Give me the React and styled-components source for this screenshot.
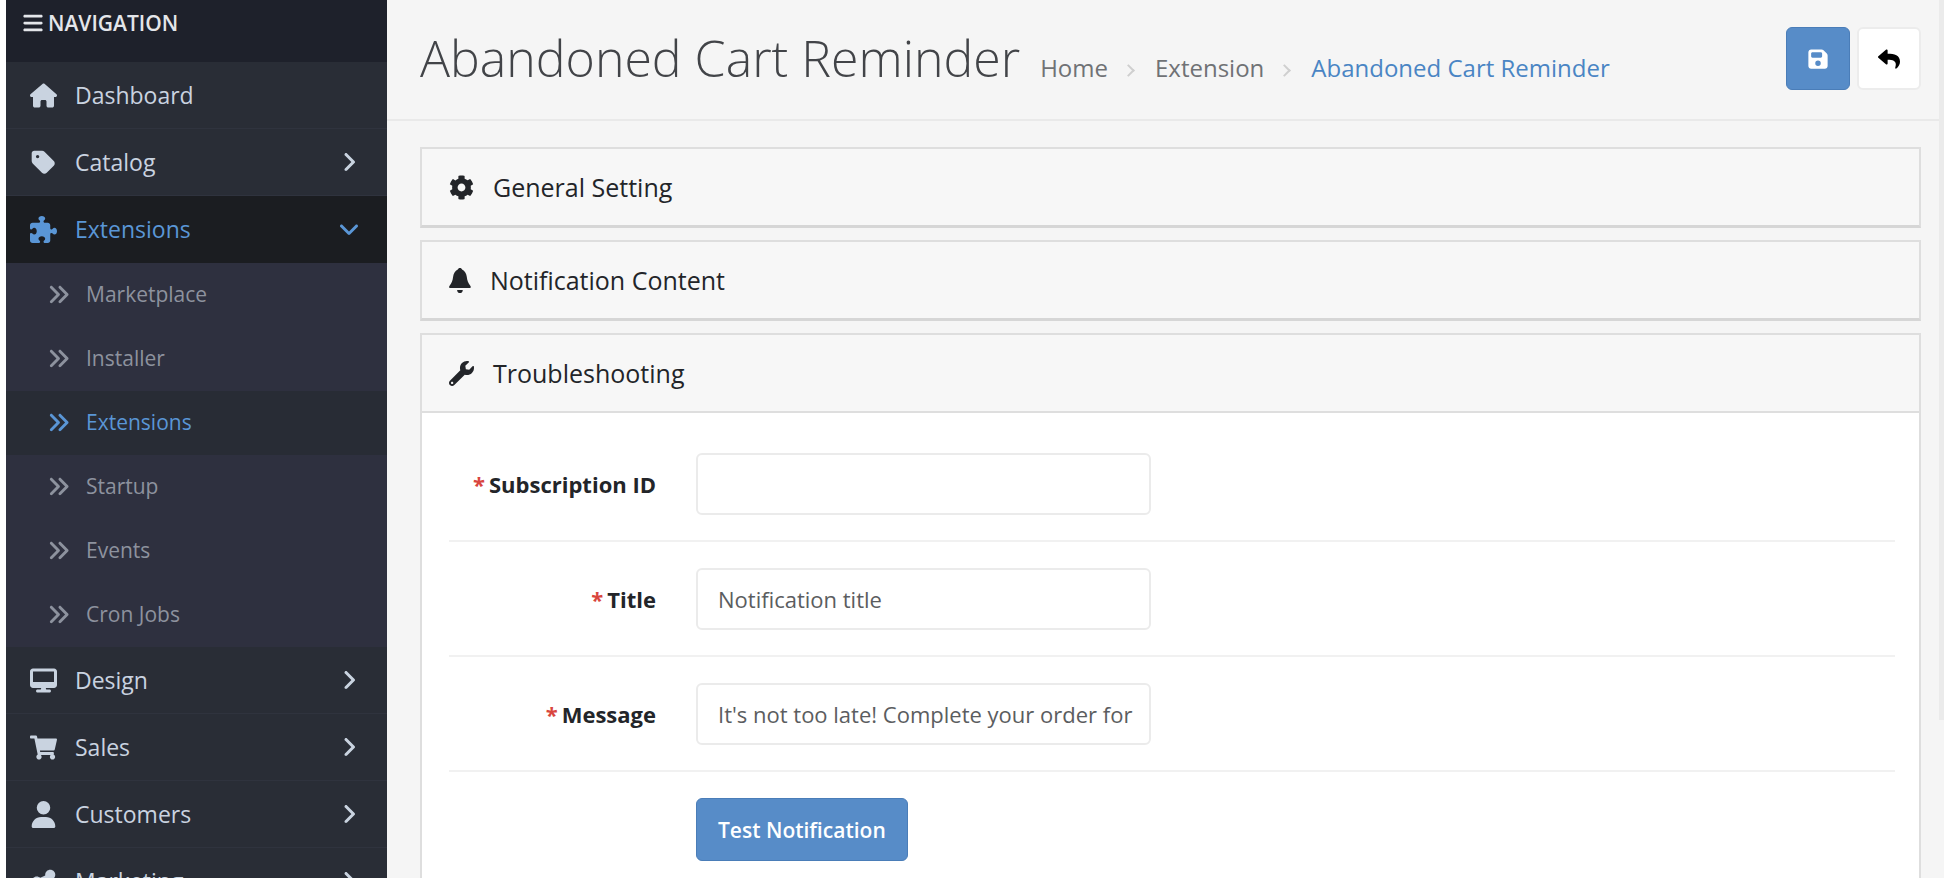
import React from 'react';
import styled, { createGlobalStyle, css } from 'styled-components';
import {
  FaBars, FaHouse, FaTag, FaPuzzlePiece, FaDesktop, FaUser, FaShareNodes,
  FaAngleRight, FaAngleDown, FaAnglesRight, FaFloppyDisk,
} from 'react-icons/fa6';
import { FaShoppingCart, FaCog, FaWrench, FaReply } from 'react-icons/fa';

const GlobalStyle = createGlobalStyle`
  *, *::before, *::after { box-sizing: border-box; }
  body {
    margin: 0;
    background: #fff;
    color: #232529;
    font-family: "Open Sans", sans-serif;
    font-size: 22px;
    line-height: 32px;
  }
  a { color: inherit; text-decoration: none; }
  button, input { font: inherit; }
  svg { display: block; flex: none; width: auto; height: 1em; }
`;

const Shell = styled.div`
  display: flex;
  height: 100vh;
  overflow: hidden;
  border: 6px solid #fff;
  border-top: 0;
`;

const Sidebar = styled.nav`
  flex: none;
  width: 381px;
  overflow: hidden;
  background: #292d36;
`;

const SidebarTitle = styled.div`
  display: flex;
  align-items: center;
  gap: 4px;
  height: 62px;
  padding: 0 16px 16px;
  background: #1e212b;
  color: #e4e6ea;
  font-size: 21px;
  font-weight: 600;

  svg { font-size: 22px; }
`;

const List = styled.ul`
  margin: 0;
  padding: 0;
  list-style: none;
`;

const NavLink = styled.a`
  display: flex;
  align-items: center;
  height: 67px;
  padding: 0 26px 0 24px;
  border-bottom: 1px solid #2f333e;
  color: #c9d3e0;
  font-size: 23px;
  ${(p) => p.$active && css`
    background: #1b1d21;
    border-color: #1b1d21;
    color: #5a96d6;
  `}
`;

const NavIcon = styled.span`
  width: 45px;
  font-size: 27px;
`;

const NavLabel = styled.span`
  flex: 1;
`;

const NavArrow = styled.span`
  font-size: 24px;
`;

const SubLink = styled.a`
  display: flex;
  align-items: center;
  gap: 16px;
  height: 64px;
  padding: 0 0 2px 41px;
  background: #2e303f;
  color: #8d929e;
  font-size: 21px;
  ${(p) => p.$active && css`
    background: #282c35;
    color: #5a96d6;
  `}

  svg { font-size: 23px; }
`;

const Main = styled.main`
  position: relative;
  flex: 1;
  min-width: 0;
  overflow: hidden;
  background: #f5f5f5;
`;

const ScrollThumb = styled.div`
  position: absolute;
  top: 0;
  right: 0;
  width: 5px;
  height: 82%;
  background: #ebebeb;
`;

const PageHeader = styled.header`
  display: flex;
  align-items: center;
  justify-content: space-between;
  height: 121px;
  padding: 0 23px 2px 33px;
  border-bottom: 2px solid #e9e9e9;
`;

const Heading = styled.div`
  display: flex;
  align-items: baseline;
  gap: 20px;
  padding-bottom: 2px;
`;

const Title = styled.h1`
  margin: 0;
  color: #424448;
  font-size: 50px;
  font-weight: 300;
  line-height: 64px;
`;

const Breadcrumb = styled.ol`
  display: flex;
  align-items: baseline;
  margin: 0;
  padding: 0;
  list-style: none;
  color: #707275;
  font-size: 24px;
`;

const Crumb = styled.li`
  color: ${(p) => (p.$current ? '#4a85c4' : 'inherit')};

  &:not(:first-child)::before {
    content: "";
    display: inline-block;
    width: 9px;
    height: 9px;
    margin: 0 22px 2px 16px;
    border: solid #cfcfcf;
    border-width: 2px 2px 0 0;
    transform: rotate(45deg);
  }
`;

const Actions = styled.div`
  display: flex;
  gap: 7px;
`;

const Button = styled.button`
  display: flex;
  align-items: center;
  justify-content: center;
  height: 63px;
  padding: 0 21px;
  border: 1px solid #4a7db8;
  border-radius: 6px;
  background: #578cc8;
  color: #fff;
`;

const IconButton = styled(Button)`
  width: 64px;
  padding: 0;
  font-size: 22px;
  ${(p) => p.$plain && css`
    border: 2px solid #ececec;
    background: #fff;
    color: #000;
  `}
`;

const Content = styled.div`
  display: flex;
  flex-direction: column;
  gap: 12px;
  padding: 26px 23px 24px 33px;
`;

const Panel = styled.section`
  border: 2px solid #dedede;
  border-bottom: 3px solid #d6d6d6;
  background: #fff;
`;

const PanelHeading = styled.h2`
  display: flex;
  align-items: center;
  gap: 19px;
  height: 76px;
  margin: 0;
  padding-left: 27px;
  background: #f7f7f7;
  font-size: 25px;
  font-weight: 400;
`;

const PanelBody = styled.form`
  padding: 14px 24px 100px 27px;
  border-top: 2px solid #dedede;
`;

const Row = styled.div`
  display: grid;
  grid-template-columns: 207px minmax(0, 455px);
  column-gap: 40px;
  align-items: center;
  height: 115px;
  border-bottom: 2px solid #f1f1f1;

  &:last-child { border-bottom: 0; }
`;

const Label = styled.label`
  text-align: right;
  font-weight: 700;

  &::before {
    content: "*";
    margin-right: 4px;
    color: #d9463e;
  }
`;

const Input = styled.input`
  width: 100%;
  height: 62px;
  padding: 0 10px 0 20px;
  border: 2px solid #ebebeb;
  border-radius: 6px;
  background: #fff;
  color: #5b5d60;
`;

const TestButton = styled(Button)`
  grid-column: 2;
  justify-self: start;
  font-size: 21px;
  font-weight: 600;
`;

function BellIcon() {
  return (
    <svg viewBox="0 0 448 512" fill="currentColor" aria-hidden="true">
      <path d="M224 0c-22 0-34 12-44 30C124 58 92 112 84 180c-9 86-30 130-72 182-20 24-10 50 18 50h388c28 0 38-26 18-50-42-52-63-96-72-182-8-68-40-122-96-150-10-18-22-30-44-30z" />
      <path d="M166 448h116c0 38-24 64-58 64s-58-26-58-64z" />
    </svg>
  );
}

const navItems = [
  { label: 'Dashboard', Icon: FaHouse },
  { label: 'Catalog', Icon: FaTag, Arrow: FaAngleRight },
  {
    label: 'Extensions',
    Icon: FaPuzzlePiece,
    Arrow: FaAngleDown,
    active: true,
    children: ['Marketplace', 'Installer', 'Extensions', 'Startup', 'Events', 'Cron Jobs'],
  },
  { label: 'Design', Icon: FaDesktop, Arrow: FaAngleRight },
  { label: 'Sales', Icon: FaShoppingCart, Arrow: FaAngleRight },
  { label: 'Customers', Icon: FaUser, Arrow: FaAngleRight },
  { label: 'Marketing', Icon: FaShareNodes, Arrow: FaAngleRight },
];

const fields = [
  { id: 'subscription-id', label: 'Subscription ID', value: '' },
  { id: 'title', label: 'Title', value: 'Notification title' },
  { id: 'message', label: 'Message', value: "It's not too late! Complete your order for" },
];

export default function App() {
  return (
    <>
      <GlobalStyle />
      <Shell>
        <Sidebar aria-label="Navigation">
          <SidebarTitle><FaBars />NAVIGATION</SidebarTitle>
          <List>
            {navItems.map(({ label, Icon, Arrow, active, children }) => (
              <li key={label}>
                <NavLink href="#" $active={active}>
                  <NavIcon><Icon /></NavIcon>
                  <NavLabel>{label}</NavLabel>
                  {Arrow && <NavArrow><Arrow /></NavArrow>}
                </NavLink>
                {children && (
                  <List>
                    {children.map((child) => (
                      <li key={child}>
                        <SubLink href="#" $active={child === 'Extensions'}>
                          <FaAnglesRight />
                          {child}
                        </SubLink>
                      </li>
                    ))}
                  </List>
                )}
              </li>
            ))}
          </List>
        </Sidebar>
        <Main>
          <PageHeader>
            <Heading>
              <Title>Abandoned Cart Reminder</Title>
              <Breadcrumb>
                <Crumb><a href="#">Home</a></Crumb>
                <Crumb><a href="#">Extension</a></Crumb>
                <Crumb $current><a href="#">Abandoned Cart Reminder</a></Crumb>
              </Breadcrumb>
            </Heading>
            <Actions>
              <IconButton type="button" aria-label="Save"><FaFloppyDisk /></IconButton>
              <IconButton type="button" aria-label="Back" $plain><FaReply /></IconButton>
            </Actions>
          </PageHeader>
          <Content>
            <Panel>
              <PanelHeading><FaCog />General Setting</PanelHeading>
            </Panel>
            <Panel>
              <PanelHeading><BellIcon />Notification Content</PanelHeading>
            </Panel>
            <Panel>
              <PanelHeading><FaWrench />Troubleshooting</PanelHeading>
              <PanelBody>
                {fields.map(({ id, label, value }) => (
                  <Row key={id}>
                    <Label htmlFor={id}>{label}</Label>
                    <Input id={id} type="text" defaultValue={value} />
                  </Row>
                ))}
                <Row>
                  <TestButton type="button">Test Notification</TestButton>
                </Row>
              </PanelBody>
            </Panel>
          </Content>
          <ScrollThumb />
        </Main>
      </Shell>
    </>
  );
}
